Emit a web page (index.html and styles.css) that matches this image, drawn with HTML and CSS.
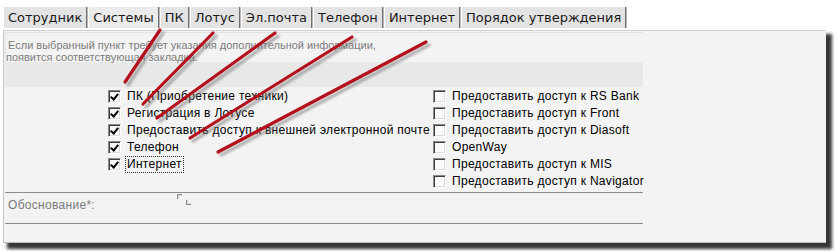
FILE: index.html
```html
<!DOCTYPE html>
<html lang="ru">
<head>
    <meta charset="UTF-8">
    <meta name="viewport" content="width=device-width, initial-scale=1.0">
    <title>Системы</title>
    <link rel="stylesheet" href="styles.css">
</head>
<body>
    <div class="tabs">
        <div class="tab">Сотрудник</div>
        <div class="tab active">Системы</div>
        <div class="tab">ПК</div>
        <div class="tab">Лотус</div>
        <div class="tab">Эл.почта</div>
        <div class="tab">Телефон</div>
        <div class="tab">Интернет</div>
        <div class="tab">Порядок утверждения</div>
    </div>

    <div class="panel">
        <div class="content">
            <div class="hint">
                <div class="hint-first">Если выбранный пункт требует указания дополнительной информации,</div>
                <div>появится соответствующая закладка.</div>
            </div>
            <div class="band"></div>

            <div class="options">
                <div class="col col-left">
                    <label class="opt"><span class="box checked"></span><span class="text">ПК (Приобретение техники)</span></label>
                    <label class="opt"><span class="box checked"></span><span class="text">Регистрация в Лотусе</span></label>
                    <label class="opt"><span class="box checked"></span><span class="text">Предоставить доступ к внешней электронной почте</span></label>
                    <label class="opt"><span class="box checked"></span><span class="text">Телефон</span></label>
                    <label class="opt"><span class="box checked"></span><span class="text focus">Интернет</span></label>
                </div>
                <div class="col col-right">
                    <label class="opt"><span class="box"></span><span class="text">Предоставить доступ к RS Bank</span></label>
                    <label class="opt"><span class="box"></span><span class="text">Предоставить доступ к Front</span></label>
                    <label class="opt"><span class="box"></span><span class="text">Предоставить доступ к Diasoft</span></label>
                    <label class="opt"><span class="box"></span><span class="text">OpenWay</span></label>
                    <label class="opt"><span class="box"></span><span class="text">Предоставить доступ к MIS</span></label>
                    <label class="opt"><span class="box"></span><span class="text">Предоставить доступ к Navigator</span></label>
                </div>
            </div>

            <div class="reason">
                <span class="reason-label">Обоснование*:</span>
                <svg class="grip" width="18" height="13" viewBox="0 0 18 13">
                    <path d="M1.5 6 V1.5 H6" fill="none" stroke="#8a8a8a" stroke-width="1"/>
                    <path d="M2.5 6 V2.5 H6" fill="none" stroke="#d8d8d8" stroke-width="1"/>
                    <path d="M10.5 7 V11.5 H15" fill="none" stroke="#8a8a8a" stroke-width="1"/>
                    <path d="M11.5 7 V10.5 H15" fill="none" stroke="#d8d8d8" stroke-width="1"/>
                </svg>
            </div>
            <div class="reason-empty"></div>
        </div>
    </div>

    <svg class="marks" width="836" height="251" viewBox="0 0 836 251">
        <defs>
            <filter id="soft" x="-10%" y="-10%" width="120%" height="120%">
                <feGaussianBlur stdDeviation="1.3"/>
            </filter>
        </defs>
        <g class="shadow" filter="url(#soft)">
            <line x1="163" y1="33" x2="128" y2="85"/>
            <line x1="216" y1="36" x2="146" y2="107"/>
            <line x1="278" y1="36" x2="160" y2="121"/>
            <line x1="355" y1="40" x2="193" y2="141"/>
            <line x1="429" y1="45" x2="221" y2="155"/>
        </g>
        <g class="red">
            <line x1="160" y1="30" x2="125" y2="82"/>
            <line x1="213" y1="33" x2="143" y2="104"/>
            <line x1="275" y1="33" x2="157" y2="118"/>
            <line x1="352" y1="37" x2="190" y2="138"/>
            <line x1="426" y1="42" x2="218" y2="152"/>
        </g>
    </svg>
</body>
</html>
```

FILE: styles.css
```css
body {
    margin: 0;
    background-color: #fff;
    font-family: "Liberation Sans", Arial, sans-serif;
    width: 836px;
    height: 251px;
    overflow: hidden;
    position: relative;
}

.tabs {
    display: flex;
    margin: 7px 0 0 4px;
    height: 21px;
}

.tab {
    background-color: #e3e3e3;
    color: #1a1a1a;
    font-family: "DejaVu Sans", sans-serif;
    font-size: 13px;
    line-height: 21px;
    padding: 0 4px 0 4px;
    border-right: 1px solid #707070;
    box-shadow: 1px 0 0 #b8b8b8;
    margin-right: 2px;
    white-space: nowrap;
}

.tab.active {
    background-color: #ebebeb;
}

.panel {
    margin: 2px 0 0 3px;
    width: 822px;
    height: 211px;
    background-color: #f3f3f3;
    border-top: 1px solid #cfcfcf;
    border-left: 1px solid #c4c4c4;
    border-bottom: 1px solid #bdbdbd;
    box-shadow: 5px 5px 3px 1px rgba(20, 20, 20, 0.85);
}

.content {
    width: 638px;
    padding-left: 1px;
}

.hint {
    margin-top: 1px;
    height: 23px;
    padding-top: 6px;
    border-top: 1px solid #e2e2e2;
    border-left: 1px solid #e2e2e2;
    font-size: 11px;
    line-height: 12px;
    color: #7c7c7c;
}

.hint-first {
    padding-left: 2px;
}

.band {
    height: 25px;
    background-color: #e8e8e8;
}

.options {
    display: flex;
    height: 104px;
    padding-top: 1px;
    border-bottom: 1px solid #8c8c8c;
}

.col-left {
    margin-left: 103px;
    width: 325px;
    flex-shrink: 0;
}

.opt {
    display: flex;
    align-items: center;
    height: 17px;
    font-size: 12px;
    letter-spacing: 0.3px;
    color: #000;
    white-space: nowrap;
}

.box {
    position: relative;
    box-sizing: border-box;
    width: 13px;
    height: 13px;
    margin-right: 5px;
    flex-shrink: 0;
    background-color: #f9f9f9;
    border-top: 1px solid #8a8a8a;
    border-left: 1px solid #8a8a8a;
    border-right: 1px solid #fff;
    border-bottom: 1px solid #fff;
    box-shadow: inset 1px 1px 0 #3e3e3e, inset -1px -1px 0 #dcdcdc;
}

.box.checked::after {
    content: "";
    position: absolute;
    left: 3px;
    top: 1px;
    width: 3px;
    height: 6px;
    border-right: 2px solid #000;
    border-bottom: 2px solid #000;
    transform: rotate(40deg);
}

.text {
    line-height: 15px;
    padding: 0 1px;
    border: 1px solid transparent;
    margin-left: -1px;
}

.text.focus {
    border: 1px dotted #333;
}

.reason {
    display: flex;
    align-items: flex-start;
    height: 30px;
    border-bottom: 1px solid #8c8c8c;
}

.reason-label {
    width: 168px;
    padding: 5px 0 0 3px;
    font-size: 12px;
    letter-spacing: 0.3px;
    color: #7a7a7a;
}

.reason-empty {
    height: 18px;
}

.marks {
    position: absolute;
    top: 0;
    left: 0;
    pointer-events: none;
}

.marks line {
    stroke-linecap: round;
}

.shadow line {
    stroke: #7a7a7a;
    stroke-width: 3.5;
    opacity: 0.55;
}

.red line {
    stroke: #b3121c;
    stroke-width: 3.2;
}
```
